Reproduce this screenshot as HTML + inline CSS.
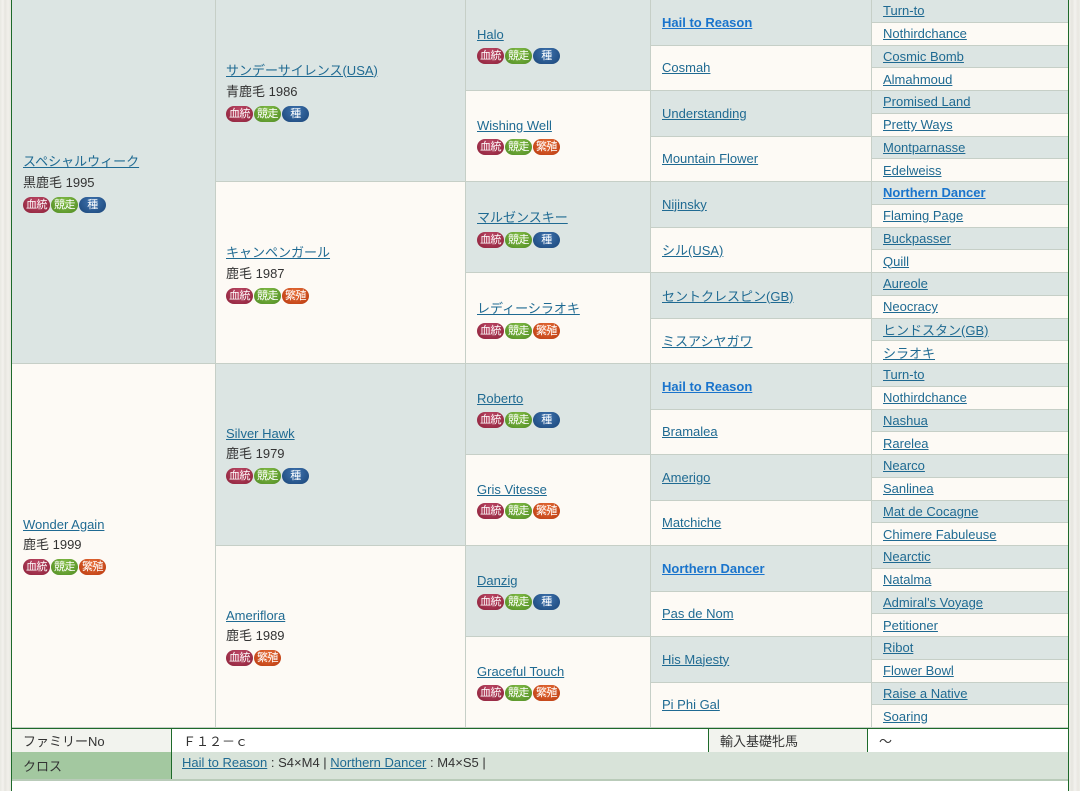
<!DOCTYPE html>
<html><head><meta charset="utf-8">
<style>
*{margin:0;padding:0;box-sizing:border-box}
body{width:1080px;height:791px;overflow:hidden;background:#fff;font-family:"Liberation Sans","Noto Sans CJK JP",sans-serif;font-size:13px;color:#333;position:relative}
.stripL{position:absolute;left:0;top:0;width:11px;height:791px;background:linear-gradient(90deg,#e9e8e2 0,#f3f2ee 3px,#e6e5df 5px,#f1f0eb 8px,#e8e7e1 11px)}
.stripR{position:absolute;left:1069px;top:0;width:11px;height:791px;background:linear-gradient(90deg,#f1f0eb 0,#e6e5df 3px,#f3f2ee 6px,#e8e7e1 9px,#eeede8 11px)}
.gl{position:absolute;top:0;width:1px;height:780px;background:#1d6a2a}
.c{position:absolute;border-right:1px solid #c6cfc7;border-bottom:1px solid #c6cfc7;display:flex;flex-direction:column;justify-content:center;padding-left:11px}
.g{background:#dce5e3}.w{background:#fdfaf5}
a{color:#1f6a92;text-decoration:underline}
a.b{color:#1a74cc;font-weight:bold}
.y{margin-top:2px;color:#333}
.bd{margin-top:6px;display:flex;gap:1px}
.bg{display:inline-block;width:27px;height:16px;border-radius:8px;color:#fff;font-size:11px;line-height:16px;text-align:center;letter-spacing:-0.5px;white-space:nowrap;overflow:hidden}
.r{background:radial-gradient(ellipse at 50% 30%,#c04a68,#8a2038)}
.n{background:radial-gradient(ellipse at 50% 30%,#86c04a,#4f8a22)}
.s{background:radial-gradient(ellipse at 50% 30%,#3f74b0,#1a4578)}
.h{background:radial-gradient(ellipse at 50% 30%,#e8703a,#b8380e)}
.c5{padding-top:0;justify-content:center}
.bot{position:absolute;font-size:13px;display:flex;align-items:center;padding-left:11px}
</style></head><body>
<div class="stripL"></div><div class="stripR"></div>

<div class="c g" style="left:12px;top:0;width:204px;height:364px"><a>スペシャルウィーク</a><div class="y">黒鹿毛 1995</div><div class="bd"><span class="bg r">血統</span><span class="bg n">競走</span><span class="bg s">種</span></div></div>
<div class="c w" style="left:12px;top:364px;width:204px;height:364px"><a>Wonder Again</a><div class="y">鹿毛 1999</div><div class="bd"><span class="bg r">血統</span><span class="bg n">競走</span><span class="bg h">繁殖</span></div></div>

<div class="c g" style="left:216px;top:0;width:250px;height:182px;padding-left:10px"><a>サンデーサイレンス(USA)</a><div class="y">青鹿毛 1986</div><div class="bd"><span class="bg r">血統</span><span class="bg n">競走</span><span class="bg s">種</span></div></div>
<div class="c w" style="left:216px;top:182px;width:250px;height:182px;padding-left:10px"><a>キャンペンガール</a><div class="y">鹿毛 1987</div><div class="bd"><span class="bg r">血統</span><span class="bg n">競走</span><span class="bg h">繁殖</span></div></div>
<div class="c g" style="left:216px;top:364px;width:250px;height:182px;padding-left:10px"><a>Silver Hawk</a><div class="y">鹿毛 1979</div><div class="bd"><span class="bg r">血統</span><span class="bg n">競走</span><span class="bg s">種</span></div></div>
<div class="c w" style="left:216px;top:546px;width:250px;height:182px;padding-left:10px"><a>Ameriflora</a><div class="y">鹿毛 1989</div><div class="bd"><span class="bg r">血統</span><span class="bg h">繁殖</span></div></div>

<div class="c g" style="left:466px;top:0;width:185px;height:91px"><a>Halo</a><div class="bd"><span class="bg r">血統</span><span class="bg n">競走</span><span class="bg s">種</span></div></div>
<div class="c w" style="left:466px;top:91px;width:185px;height:91px"><a>Wishing Well</a><div class="bd"><span class="bg r">血統</span><span class="bg n">競走</span><span class="bg h">繁殖</span></div></div>
<div class="c g" style="left:466px;top:182px;width:185px;height:91px"><a>マルゼンスキー</a><div class="bd"><span class="bg r">血統</span><span class="bg n">競走</span><span class="bg s">種</span></div></div>
<div class="c w" style="left:466px;top:273px;width:185px;height:91px"><a>レディーシラオキ</a><div class="bd"><span class="bg r">血統</span><span class="bg n">競走</span><span class="bg h">繁殖</span></div></div>
<div class="c g" style="left:466px;top:364px;width:185px;height:91px"><a>Roberto</a><div class="bd"><span class="bg r">血統</span><span class="bg n">競走</span><span class="bg s">種</span></div></div>
<div class="c w" style="left:466px;top:455px;width:185px;height:91px"><a>Gris Vitesse</a><div class="bd"><span class="bg r">血統</span><span class="bg n">競走</span><span class="bg h">繁殖</span></div></div>
<div class="c g" style="left:466px;top:546px;width:185px;height:91px"><a>Danzig</a><div class="bd"><span class="bg r">血統</span><span class="bg n">競走</span><span class="bg s">種</span></div></div>
<div class="c w" style="left:466px;top:637px;width:185px;height:91px"><a>Graceful Touch</a><div class="bd"><span class="bg r">血統</span><span class="bg n">競走</span><span class="bg h">繁殖</span></div></div>

<div class="c g" style="left:651px;top:0;width:221px;height:45.5px"><a class="b">Hail to Reason</a></div>
<div class="c w" style="left:651px;top:45.5px;width:221px;height:45.5px"><a>Cosmah</a></div>
<div class="c g" style="left:651px;top:91px;width:221px;height:45.5px"><a>Understanding</a></div>
<div class="c w" style="left:651px;top:136.5px;width:221px;height:45.5px"><a>Mountain Flower</a></div>
<div class="c g" style="left:651px;top:182px;width:221px;height:45.5px"><a>Nijinsky</a></div>
<div class="c w" style="left:651px;top:227.5px;width:221px;height:45.5px"><a>シル(USA)</a></div>
<div class="c g" style="left:651px;top:273px;width:221px;height:45.5px"><a>セントクレスピン(GB)</a></div>
<div class="c w" style="left:651px;top:318.5px;width:221px;height:45.5px"><a>ミスアシヤガワ</a></div>
<div class="c g" style="left:651px;top:364px;width:221px;height:45.5px"><a class="b">Hail to Reason</a></div>
<div class="c w" style="left:651px;top:409.5px;width:221px;height:45.5px"><a>Bramalea</a></div>
<div class="c g" style="left:651px;top:455px;width:221px;height:45.5px"><a>Amerigo</a></div>
<div class="c w" style="left:651px;top:500.5px;width:221px;height:45.5px"><a>Matchiche</a></div>
<div class="c g" style="left:651px;top:546px;width:221px;height:45.5px"><a class="b">Northern Dancer</a></div>
<div class="c w" style="left:651px;top:591.5px;width:221px;height:45.5px"><a>Pas de Nom</a></div>
<div class="c g" style="left:651px;top:637px;width:221px;height:45.5px"><a>His Majesty</a></div>
<div class="c w" style="left:651px;top:682.5px;width:221px;height:45.5px"><a>Pi Phi Gal</a></div>

<div class="c c5 g" style="left:872px;top:0px;width:197px;height:22.75px"><a>Turn-to</a></div>
<div class="c c5 w" style="left:872px;top:22.75px;width:197px;height:22.75px"><a>Nothirdchance</a></div>
<div class="c c5 g" style="left:872px;top:45.5px;width:197px;height:22.75px"><a>Cosmic Bomb</a></div>
<div class="c c5 w" style="left:872px;top:68.25px;width:197px;height:22.75px"><a>Almahmoud</a></div>
<div class="c c5 g" style="left:872px;top:91px;width:197px;height:22.75px"><a>Promised Land</a></div>
<div class="c c5 w" style="left:872px;top:113.75px;width:197px;height:22.75px"><a>Pretty Ways</a></div>
<div class="c c5 g" style="left:872px;top:136.5px;width:197px;height:22.75px"><a>Montparnasse</a></div>
<div class="c c5 w" style="left:872px;top:159.25px;width:197px;height:22.75px"><a>Edelweiss</a></div>
<div class="c c5 g" style="left:872px;top:182px;width:197px;height:22.75px"><a class="b">Northern Dancer</a></div>
<div class="c c5 w" style="left:872px;top:204.75px;width:197px;height:22.75px"><a>Flaming Page</a></div>
<div class="c c5 g" style="left:872px;top:227.5px;width:197px;height:22.75px"><a>Buckpasser</a></div>
<div class="c c5 w" style="left:872px;top:250.25px;width:197px;height:22.75px"><a>Quill</a></div>
<div class="c c5 g" style="left:872px;top:273px;width:197px;height:22.75px"><a>Aureole</a></div>
<div class="c c5 w" style="left:872px;top:295.75px;width:197px;height:22.75px"><a>Neocracy</a></div>
<div class="c c5 g" style="left:872px;top:318.5px;width:197px;height:22.75px"><a>ヒンドスタン(GB)</a></div>
<div class="c c5 w" style="left:872px;top:341.25px;width:197px;height:22.75px"><a>シラオキ</a></div>
<div class="c c5 g" style="left:872px;top:364px;width:197px;height:22.75px"><a>Turn-to</a></div>
<div class="c c5 w" style="left:872px;top:386.75px;width:197px;height:22.75px"><a>Nothirdchance</a></div>
<div class="c c5 g" style="left:872px;top:409.5px;width:197px;height:22.75px"><a>Nashua</a></div>
<div class="c c5 w" style="left:872px;top:432.25px;width:197px;height:22.75px"><a>Rarelea</a></div>
<div class="c c5 g" style="left:872px;top:455px;width:197px;height:22.75px"><a>Nearco</a></div>
<div class="c c5 w" style="left:872px;top:477.75px;width:197px;height:22.75px"><a>Sanlinea</a></div>
<div class="c c5 g" style="left:872px;top:500.5px;width:197px;height:22.75px"><a>Mat de Cocagne</a></div>
<div class="c c5 w" style="left:872px;top:523.25px;width:197px;height:22.75px"><a>Chimere Fabuleuse</a></div>
<div class="c c5 g" style="left:872px;top:546px;width:197px;height:22.75px"><a>Nearctic</a></div>
<div class="c c5 w" style="left:872px;top:568.75px;width:197px;height:22.75px"><a>Natalma</a></div>
<div class="c c5 g" style="left:872px;top:591.5px;width:197px;height:22.75px"><a>Admiral's Voyage</a></div>
<div class="c c5 w" style="left:872px;top:614.25px;width:197px;height:22.75px"><a>Petitioner</a></div>
<div class="c c5 g" style="left:872px;top:637px;width:197px;height:22.75px"><a>Ribot</a></div>
<div class="c c5 w" style="left:872px;top:659.75px;width:197px;height:22.75px"><a>Flower Bowl</a></div>
<div class="c c5 g" style="left:872px;top:682.5px;width:197px;height:22.75px"><a>Raise a Native</a></div>
<div class="c c5 w" style="left:872px;top:705.25px;width:197px;height:22.75px"><a>Soaring</a></div>

<div style="position:absolute;left:11px;top:728px;width:1058px;height:1px;background:#1d6a2a"></div>
<div class="bot" style="left:12px;top:729px;width:160px;height:23px;background:#f2f3ee;border-right:1px solid #1d6a2a">ファミリーNo</div>
<div class="bot" style="left:172px;top:729px;width:537px;height:23px;background:#fff;border-right:1px solid #1d6a2a">Ｆ１２－ｃ</div>
<div class="bot" style="left:709px;top:729px;width:159px;height:23px;background:#f2f3ee;border-right:1px solid #1d6a2a">輸入基礎牝馬</div>
<div class="bot" style="left:868px;top:729px;width:200px;height:23px;background:#fff">～</div>
<div class="bot" style="left:12px;top:752px;width:160px;height:27px;background:#a3c8a0;border-right:1px solid #1d6a2a">クロス</div>
<div class="bot" style="left:172px;top:752px;width:896px;height:27px;background:#d8e3d9;padding-left:10px;align-items:flex-start;padding-top:3px"><a>Hail to Reason</a>&nbsp;: S4×M4 |&nbsp;<a>Northern Dancer</a>&nbsp;: M4×S5 |</div>
<div style="position:absolute;left:11px;top:779px;width:1058px;height:2px;background:#b9cbb9"></div>
<div class="gl" style="left:11px;height:791px"></div>
<div class="gl" style="left:1068px;height:791px"></div>
</body></html>
